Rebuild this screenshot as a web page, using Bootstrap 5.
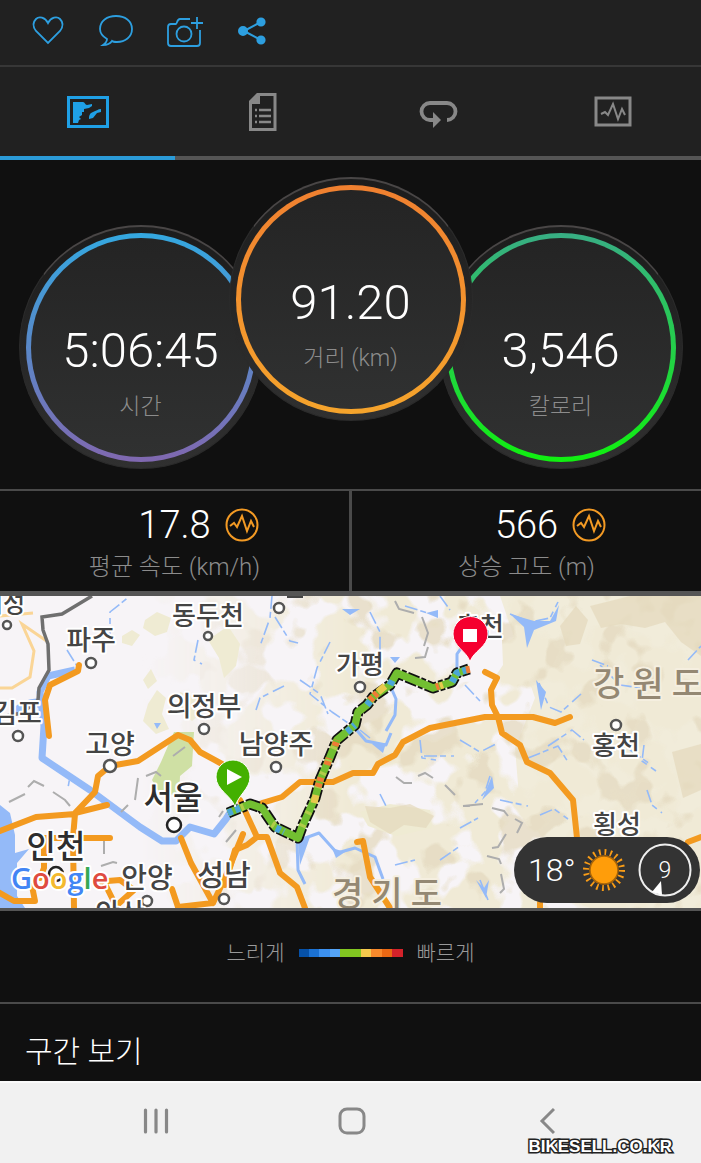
<!DOCTYPE html>
<html lang="ko">
<head>
<meta charset="utf-8">
<meta name="viewport" content="width=device-width, initial-scale=1">
<title>활동 요약</title>
<link href="https://cdn.jsdelivr.net/npm/bootstrap@5.3.0/dist/css/bootstrap.min.css" rel="stylesheet">
<style>
  body { background: #101010; color: #fff; font-family: Roboto, "Noto Sans CJK KR", sans-serif; font-weight: 300; }
  svg { display: block; }
  button { background: none; border: 0; padding: 0; color: inherit; }
  .actions { background: #212121; height: 67px; padding: 0 28px 6px; gap: 28px; border-bottom: 2px solid #373737; }
  .actions button { width: 40px; height: 40px; color: #2d9fe0; }
  .tabs { background: #212121; }
  .tabs button, .sysbar button { flex: 1 1 0; }
  .tabs button { height: 93px; border-bottom: 4px solid #555; color: #888; }
  .tabs button.active { border-color: #2b9bd8; color: #1fa0e6; }
  .dials { padding: 17px 0 20px; border-bottom: 2px solid #4a4a4a; }
  .dial { width: 244px; height: 244px; margin: 48px -17px 0; padding: 6px; border-radius: 50%; background: linear-gradient(#1c1c1c, #303030); border: 1px solid #2b2b2b; border-top: 2px solid #494646; flex: none; }
  .dial.front { position: relative; z-index: 1; margin-top: 0; }
  .ring { height: 100%; border-radius: 50%; border: 5px solid transparent; padding-top: 84px; background: linear-gradient(#242424, #303131) padding-box, linear-gradient(var(--from), var(--to)) border-box; }
  .dial-value { font-size: 49px; line-height: 58px; }
  .caption { font-size: 23px; line-height: 30px; color: #8c8c8c; }
  .ring .caption { margin-top: 12px; }
  .stats { border-bottom: 5px solid #555; }
  .stat { height: 100px; padding-top: 12px; }
  .stat + .stat { border-left: 3px solid #4a4a4a; }
  .stat-row { display: grid; grid-template-columns: 1fr auto 1fr; gap: 14px; align-items: center; font-size: 38px; line-height: 44px; }
  .stat .caption { margin-top: 5px; font-size: 24px; }
  .map { border-bottom: 3px solid #555; }
  .map text { font-family: "Noto Sans CJK KR", sans-serif; font-weight: 500; fill: #444; stroke: #fff; stroke-width: 4px; stroke-linejoin: round; paint-order: stroke; text-anchor: middle; font-size: 27px; }
  .map .city { font-size: 32px; fill: #2e2e2e; }
  .map .province { font-size: 34px; fill: #948873; stroke: #f5efe0; letter-spacing: 8px; }
  .map .brand { font-family: "Open Sans", sans-serif; font-size: 29px; font-weight: 600; text-anchor: start; }
  .weather { right: 1px; bottom: 5px; width: 186px; height: 66px; padding: 0 8px 0 14px; gap: 6px; background: #333; font-size: 32px; }
  .legend-row { height: 93px; gap: 14px; padding-bottom: 7px; border-bottom: 2px solid #4a4a4a; }
  .legend-row .caption { font-size: 21px; color: #999; }
  .scale { width: 104px; height: 8px; }
  .scale i { flex: 1; }
  .sections { height: 77px; padding: 19px 25px; font-size: 30px; line-height: 58px; }
  .sysbar { height: 82px; background: #f1f1f1; border-top: 2px solid #fafafa; color: #888; padding: 0 56px 0 58px; }
  .sysbar button { height: 76px; }
  .watermark { right: 29px; bottom: 4px; font: bold 17px/24px "Liberation Sans", sans-serif; color: #fff; -webkit-text-stroke: 3px #222; paint-order: stroke; }
</style>
</head>
<body>
<header>
  <div class="actions d-flex align-items-center">
    <button type="button" aria-label="좋아요"><svg width="40" height="40" viewBox="0 0 40 40" fill="none" stroke="currentColor" stroke-width="1.8"><path d="M20 13C17 7 11 6 8 9c-4 4-3 8 0 12l12 12 12-12c3-4 4-8 0-12-3-3-9-2-12 4z"/></svg></button>
    <button type="button" aria-label="댓글"><svg width="40" height="40" viewBox="0 0 40 40" fill="none" stroke="currentColor" stroke-width="1.8"><path d="M11 29C6 26 4 23 4 19 4 11 11 6 20 6s16 5 16 13-7 13-15 13c-2 0-4 0-5-1-2 3-6 4-9 4 3-2 4-4 4-6z"/></svg></button>
    <button type="button" aria-label="사진 추가"><svg width="40" height="40" viewBox="0 0 40 40" fill="none" stroke="currentColor" stroke-width="1.8"><path d="M26 9H16c-3 0-3 5-4 5H7c-2 0-3 1-3 3v16c0 2 1 3 3 3h26c2 0 3-1 3-3V20M33 7v12M27 13h12"/><circle cx="20" cy="24" r="7.5"/></svg></button>
    <button type="button" aria-label="공유"><svg width="40" height="40" viewBox="0 0 40 40" fill="currentColor" stroke="currentColor" stroke-width="2"><path d="M12 21l17-9M12 21l17 9" fill="none"/><circle cx="11" cy="21" r="4"/><circle cx="29" cy="12" r="3.6"/><circle cx="29" cy="30" r="3.6"/></svg></button>
  </div>
  <nav class="tabs d-flex" aria-label="활동 보기">
    <button type="button" class="active d-flex align-items-center justify-content-center" aria-label="지도"><svg width="42" height="34" viewBox="0 0 42 34"><path d="M1.5 2.500h39v29h-39z" fill="none" stroke="currentColor" stroke-width="3"/><path d="M6 7h10c2 0 2 3 4 3l5-1v2l-3 2-5 1v3h-2v3l-3 2 2 2-2 1-1 3H6zM34 14v3l-4 1-4 5-4 1c0-4 1-6 4-7 3-1 5-3 8-3z" fill="currentColor"/></svg></button>
    <button type="button" class="d-flex align-items-center justify-content-center" aria-label="통계"><svg width="30" height="40" viewBox="0 0 30 40"><path d="M10 2.500h17v35H2.500V10z" fill="none" stroke="currentColor" stroke-width="3"/><path d="M9 1h3v11H1V9z" fill="currentColor"/><path d="M7 18h2m2 0h12M7 24h2m2 0h12M7 30h2m2 0h12" stroke="currentColor" stroke-width="2.500"/></svg></button>
    <button type="button" class="d-flex align-items-center justify-content-center" aria-label="랩"><svg width="40" height="32" viewBox="0 0 40 32"><path d="M16 24h-4a8.500 8.500 0 0 1 0-17h17a8.500 8.500 0 0 1 0 17" fill="none" stroke="currentColor" stroke-width="3.800"/><path d="M15 16l8 8-8 8z" fill="currentColor"/></svg></button>
    <button type="button" class="d-flex align-items-center justify-content-center" aria-label="그래프"><svg width="38" height="31" viewBox="0 0 38 31" fill="none" stroke="currentColor"><path d="M2 2h34v27H2z" stroke-width="3"/><path d="M7 18l4-2 3 3 5-11 5 15 4-10 3 6" stroke-width="2"/></svg></button>
  </nav>
</header>

<main>
  <section class="dials d-flex justify-content-center text-center">
    <div class="dial"><div class="ring" style="--from:#34a8e0;--to:#8068b0"><div class="dial-value">5:06:45</div><div class="caption">시간</div></div></div>
    <div class="dial front"><div class="ring" style="--from:#f08030;--to:#f5a42c"><div class="dial-value">91.20</div><div class="caption">거리 (km)</div></div></div>
    <div class="dial"><div class="ring" style="--from:#38ae84;--to:#10f010"><div class="dial-value">3,546</div><div class="caption">칼로리</div></div></div>
  </section>

  <section class="stats row g-0 text-center">
    <div class="stat col">
      <div class="stat-row"><span></span><span>17.8</span><svg width="34" height="34" viewBox="0 0 34 34" fill="none" stroke="#f39a24" stroke-width="2"><circle cx="17" cy="17" r="15.500"/><path d="M5 18l4-3 3 4 5-11 5 15 4-10 3 6"/></svg></div>
      <div class="caption">평균 속도 (km/h)</div>
    </div>
    <div class="stat col">
      <div class="stat-row"><span></span><span>566</span><svg width="34" height="34" viewBox="0 0 34 34" fill="none" stroke="#f39a24" stroke-width="2"><circle cx="17" cy="17" r="15.500"/><path d="M5 18l4-3 3 4 5-11 5 15 4-10 3 6"/></svg></div>
      <div class="caption">상승 고도 (m)</div>
    </div>
  </section>

  <section class="map position-relative">
    <svg class="w-100 h-auto" viewBox="0 596 701 312" role="img" aria-label="경로 지도">
      <defs>
        <filter id="relief" x="0" y="0" width="1" height="1" color-interpolation-filters="sRGB"><feTurbulence type="fractalNoise" baseFrequency=".022" numOctaves="3" seed="8"/><feColorMatrix values="0 0 0 0 .94  0 0 0 0 .918  0 0 0 0 .84  14 0 0 0 -6.400"/></filter>
        <filter id="ridge" x="0" y="0" width="1" height="1" color-interpolation-filters="sRGB"><feTurbulence type="fractalNoise" baseFrequency=".026" numOctaves="3" seed="21"/><feColorMatrix values="0 0 0 0 .898  0 0 0 0 .859  0 0 0 0 .76  12 0 0 0 -6.800"/></filter>
        <linearGradient id="fade"><stop offset=".2" stop-color="#000"/><stop offset=".5" stop-color="#fff"/></linearGradient>
        <mask id="east"><path d="M0 596h701v312H0z" fill="url(#fade)"/></mask>
      </defs>
      <path d="M0 596h701v312H0z" fill="#f7f4f7"/>
      <path d="M500 596h201v312H590l-40-60-30-40-5-60 20-50z" fill="#f1ecda"/>
      <g mask="url(#east)"><path d="M0 596h701v312H0z" filter="url(#relief)"/><path d="M200 596h501v312H200z" filter="url(#ridge)" opacity=".8"/></g>
      <g fill="#efebd3"><path d="M145 620l12-8 14 6-4 14-12 4-12-8zM143 680l8-11 6 12-9 8zM122 636l10-6 8 5-8 11-10-3zM148 704l9-14 9 8-4 16 7 15-13 5-13-13zM208 640l20-14 12 18-4 22-12 12-5-20zM180 692l18 6 5 14-11 9-14-12zM360 812l30-8 40 6 2 18-36 8-28-10z"/></g>
      <path d="M452 655l20-10 29-30 2 50-10 15-30 2z" fill="#f7f4f7"/>
      <path d="M174 732l20 0-2 34-12 10-1 20-20-4-7-12 9-18z" fill="#cfe0a4"/>
      <path d="M365 806l25 2 20-4 24 12-8 12-22-3-14 9-20-12zM590 606l40-10h71v60l-20-14-16-20-20 6-24-4-20 4zM560 626l16-20 12 14-8 24-14 2zM672 752l29-8v46l-18 8z" fill="#e4d9bc" opacity=".7"/>
      <path d="M0 805l10 8 5 22 0 18 14-4-12 14 0 33 8 12H0z" fill="#94baf8"/>
      <g fill="none" stroke="#94baf8" stroke-linejoin="round">
        <path d="M75 670l-27 6-8 16 4 34-2 32 18 12 30 20 50 37 22 14 14 0 14-14 24 7 12-15 7-11" stroke-width="7"/>
        <path d="M15 712q15-12 28-8" stroke-width="9"/>
        <path d="M297 841l22-8 18 20 18-5 20 9 8 22M297 841l1 29 7 14M354 727l12 14 20 4 5-12M389 683l7 16-1 16-9 16M457 672l0-18 7-10" stroke-width="3"/>
        <path d="M272 596l-2 22-10 28M275 617l15 24 8 2M330 642l-13 26-7 26 22 18 19 13M370 612l10 20v22M110 640v-28l20-16M67 650l10 16M60 770l10 6-2 12M405 606l26 8M440 596l10 14M510 614l20 8 20-4 8-16M539 683l10 24 12 5 20-18M600 665l20 20 28 4M465 685l15 16M490 776l-5 16-10 11M540 815l14-6 14 10M647 790l5 15 10 8M440 860l20-14M395 865l20-5M480 880l8 20M630 750l20 14M198 640l-4 20 8 4M256 710l4-12 24-12M300 680l20 14 8 20M420 740l2 18 14 2M424 756h30M460 740l20 12 16-8M528 758l30-12 10 16M548 746l24-16 12 10M500 800l28 6M460 828l18-10M644 745l-2 16 14 10M688 660l13-14M592 660l16 6M380 794l6 12M360 730l10 8" stroke-width="1.600" stroke-dasharray="13 3 6 5"/>
      </g>
      <path d="M510 614l24 7 16 0 9-16-3 16-22 9-7 18-3-21zM298 840l12-3-10 28zM332 848l13 4-9 6zM342 609l18 0-10 6zM390 657l10 0-5 6zM536 680l10 12-5 18zM154 723h7l-4 6zM426 613l12-3v8zM372 744l14-1-3 10zM476 880l8 8 5-8-3 18zM492 776l2 12-12 12z" fill="#94baf8"/>
      <g fill="none" stroke="#adadad" stroke-width="2"><path d="M9 802l16-8M28 787l6-6 10 5M53 792l12 8 5 6M146 776l10-4 5 4M138 778l-3 22M121 812l7-7M80 840l12 0M104 840v14M101 866l12-4 4 1M173 756l12-9M395 601l4 8 15 4M422 617l6 16-4 13M415 658l10-1 3-10M396 777l8 6 8 0M418 776l7-3 8 5M445 785l10 10M463 806l7 0M463 806l20-2M492 808l12 3 4 5M515 819l7 4-5 10M506 834l-8 13-6 1M487 856l12 3 2 5M501 874l3 15-4 4M223 811l-4 6M236 830l-10 12"/></g>
      <path d="M0 688h12l18-11 4-26-12-27 26 18M0 616l33-3" fill="none" stroke="#fad596" stroke-width="3"/>
      <path d="M92 596l-30 18-20 3 1 13 5 14 1 26-10 18-1 12-16 13-22 4" fill="none" stroke="#6f6f6f" stroke-width="3.500"/>
      <g fill="none" stroke="#f39a20" stroke-width="6" stroke-linejoin="round" stroke-linecap="round">
        <path d="M79 665l-1 6-28 14-5 15 4 36M222 764l-22-12-10-12-12-5-40 26-28 5-12 10-3 16-20 21 32-8M75 814l-39 3L0 831M75 814l-2 24 1 70M44 838v30l-4 10M44 838h66M0 893l14 8h21l-3-15M181 838l10 25 22 40M243 834l-18 44-12 25-35 4-6-18M95 882l25-2 14 10-18 16-14-28"/>
        <path d="M240 800l17 37h10l13 36 17 14 8 21M257 837l-10 8-12 5-10 35M262 803l20-6 18-15h33l20-9h20l5-9 17-9 8-13 27-14 40-8 15-3h48l22 6 15-6M485 672l12 6-6 12 1 15 6 12 4 16 18 12 7 17 23 11 23 27 4 38M357 842l6-1 7 36 20 31M688 842l13-5M540 908v-5"/>
      </g>
      <g fill="none" stroke-linejoin="round">
        <path d="M228 813l22-9 12 4 13 19 23 11 4-11 13-29 5-18 10-23 7-17 18-15 3-13 9-7 6-8 17-12 7-12 36 15 19-6 5-9 12-4" stroke="#111" stroke-width="11" stroke-dasharray="12 2 5 2"/>
        <path d="M228 813l22-9 12 4 13 19 23 11 4-11 13-29 5-18 10-23 7-17 18-15 3-13 9-7 6-8 17-12 7-12 36 15 19-6 5-9 12-4" stroke="#72bf31" stroke-width="7.500"/>
        <path d="M228 813l22-9M272 824l12 8M302 827l13-29 5-18 10-23 7-17" stroke="#b2cc4a" stroke-width="7" stroke-dasharray="3 11"/>
        <path d="M228 813l12-5M276 828l8 4M347 732l8-7M367 705l5-6M390 685l3-6M452 682l5-9 12-4" stroke="#4ba6d8" stroke-width="7" stroke-dasharray="5 3"/>
        <path d="M318 787l3-10M327 765l2-7M335 746l2-6M370 700l8-8M436 687l3-1M466 670l5-1" stroke="#ef7b36" stroke-width="7" stroke-dasharray="4 2"/>
        <path d="M378 692l7-6M314 803l2-8M440 686l3-1" stroke="#e8c94e" stroke-width="7"/>
      </g>
      <g fill="#fff" stroke="#555" stroke-width="2.500"><circle cx="7" cy="625" r="4"/><circle cx="91" cy="663" r="5"/><circle cx="208" cy="636" r="4"/><circle cx="279" cy="608" r="5"/><circle cx="18" cy="736" r="5"/><circle cx="204" cy="729" r="5"/><circle cx="110" cy="766" r="6"/><circle cx="276" cy="767" r="5"/><circle cx="360" cy="687" r="5"/><circle cx="616" cy="725" r="5"/><circle cx="174" cy="825" r="7" stroke="#222"/><circle cx="56" cy="874" r="7" stroke="#222"/><circle cx="147" cy="901" r="5"/><circle cx="224" cy="899" r="5"/></g>
      <path d="M287 596h16v2h-16z" fill="#444"/>
      <text x="3" y="612" style="font-size:24px">여성</text><text x="91" y="650">파주</text><text x="208" y="625" style="font-size:26px">동두천</text><text x="17" y="723">김포</text><text x="204" y="716">의정부</text><text x="110" y="754">고양</text><text x="276" y="754">남양주</text><text x="360" y="674" style="font-size:26px">가평</text><text x="480" y="636" style="font-size:26px">춘천</text><text x="616" y="755" style="font-size:26px">홍천</text><text x="617" y="834" style="font-size:26px">횡성</text><text x="147" y="888" style="font-size:28px">안양</text><text x="224" y="886" style="font-size:29px">성남</text><text x="120" y="923">안산</text>
      <text class="city" x="173" y="809">서울</text><text class="city" x="56" y="858">인천</text>
      <text class="province" x="652" y="696">강원도</text><text class="province" x="391" y="906">경기도</text>
      <text class="brand" x="11" y="889"><tspan fill="#4285f4">G</tspan><tspan fill="#df4b40">o</tspan><tspan fill="#f4b92e">o</tspan><tspan fill="#4285f4">g</tspan><tspan fill="#36a853">l</tspan><tspan fill="#df4b40">e</tspan></text>
      <path d="M235 807c-3-11-19-17-19-30a17 17 0 0 1 34 0c0 12-12 18-15 30z" fill="#43b000" stroke="#fff"/><path d="M227 769l15 8-15 8z" fill="#fff"/>
      <path d="M470 662c-3-11-17-15-17-28a17 17 0 0 1 35 0c0 13-15 17-18 28z" fill="#f5002f" stroke="#fff"/><path d="M463 629h14v13h-14z" fill="#fff"/>
    </svg>
    <div class="weather position-absolute rounded-pill d-flex align-items-center">
      <span>18°</span>
      <svg width="44" height="44" viewBox="-22 -22 44 44"><circle r="18" fill="none" stroke="#f99c16" stroke-width="6" stroke-dasharray="1.800 3.855"/><circle r="14" fill="#ff9d0a" stroke="#a96508" stroke-width="1.500"/></svg>
      <svg class="ms-auto" width="54" height="54" viewBox="0 0 54 54"><circle cx="27" cy="27" r="25.500" fill="none" stroke="#eee" stroke-width="2"/><path d="M14 49l9-11 1 14z" fill="#fff"/><text x="27" y="35" style="font:300 23px Roboto,sans-serif;fill:#fff;stroke:none">9</text></svg>
    </div>
  </section>

  <section class="legend-row d-flex align-items-center justify-content-center">
    <span class="caption">느리게</span>
    <div class="scale d-flex"><i style="background:#0651a8"></i><i style="background:#1b72d4"></i><i style="background:#3c91f0"></i><i style="background:#55a5f7"></i><i style="background:#82c621"></i><i style="background:#82c621"></i><i style="background:#f5c94d"></i><i style="background:#f88a2c"></i><i style="background:#ea6814"></i><i style="background:#d4222a"></i></div>
    <span class="caption">빠르게</span>
  </section>
  <h2 class="sections fw-light m-0">구간 보기</h2>
</main>

<footer class="sysbar position-relative d-flex">
  <button type="button" class="d-flex align-items-center justify-content-center" aria-label="최근 앱"><svg width="26" height="28" viewBox="0 0 26 28" stroke="currentColor" stroke-width="3.200" stroke-linecap="round"><path d="M2.500 3v22M13 3v22M23.500 3v22"/></svg></button>
  <button type="button" class="d-flex align-items-center justify-content-center" aria-label="홈"><svg width="28" height="28" viewBox="0 0 28 28" fill="none" stroke="currentColor" stroke-width="3"><rect x="2" y="2" width="24" height="24" rx="7"/></svg></button>
  <button type="button" class="d-flex align-items-center justify-content-center" aria-label="뒤로"><svg width="16" height="28" viewBox="0 0 16 28" fill="none" stroke="currentColor" stroke-width="3"><path d="M15 2L3 14l12 12"/></svg></button>
  <span class="watermark position-absolute">BIKESELL.CO.KR</span>
</footer>
<script src="https://cdn.jsdelivr.net/npm/bootstrap@5.3.0/dist/js/bootstrap.bundle.min.js"></script>
</body>
</html>
